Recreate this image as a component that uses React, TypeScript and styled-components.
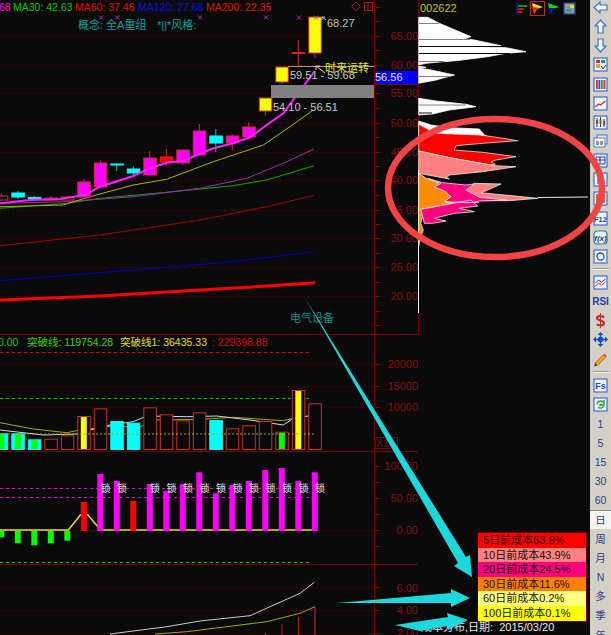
import styled, { createGlobalStyle } from 'styled-components';
import type { ReactNode } from 'react';

const GlobalStyle = createGlobalStyle`
  html, body { margin: 0; padding: 0; background: #0a0a0a; }
  body { width: 611px; height: 635px; overflow: hidden; font-family: "Liberation Sans", "Noto Sans CJK SC", sans-serif; }
`;

const AXIS_RED = '#960808';
const GRID_RED = '#7a0000';
const DOT_RED = '#6a0000';

// traced off the 3x crops, so everything is divided back down
type Pt = [number, number];
const crop = (pts: Pt[], dx = 0, dy = 0) =>
  pts.map(([x, y]) => `${(x / 3 + dx).toFixed(1)},${(y / 3 + dy).toFixed(1)}`).join(' ');

const slotX = (i: number) => 1.3 + 16.5 * i;

const Page = styled.div`
  position: relative;
  display: grid;
  grid-template-columns: 418px 172px 21px;
  width: 611px;
  height: 635px;
  overflow: hidden;
  background: #0a0a0a;
`;

const ChartColumn = styled.div`
  display: flex;
  flex-direction: column;
  height: 635px;
`;

const Pane = styled.section<{ $h: number; $line?: boolean }>`
  position: relative;
  display: flex;
  height: ${(p) => p.$h}px;
  flex: none;
  box-sizing: border-box;
  border-bottom: ${(p) => (p.$line ? `1px solid ${GRID_RED}` : 'none')};
`;

const Plot = styled.svg`
  display: block;
  width: 374px;
  height: 100%;
  flex: none;
`;

const AxisBox = styled.svg`
  display: block;
  width: 44px;
  height: 100%;
  flex: none;
  border-left: 1px solid ${GRID_RED};
  box-sizing: border-box;
`;

const AxisLabel = styled.text`
  font-size: 11px;
  fill: ${AXIS_RED};
  text-anchor: end;
`;

const Legend = styled.div<{ $top: number; $left: number; $size?: number }>`
  position: absolute;
  top: ${(p) => p.$top}px;
  left: ${(p) => p.$left}px;
  display: flex;
  white-space: nowrap;
  font-size: ${(p) => p.$size ?? 10.5}px;
  line-height: 14px;
`;

const LegendItem = styled.span<{ $color: string; $w?: number }>`
  color: ${(p) => p.$color};
  width: ${(p) => (p.$w ? `${p.$w}px` : 'auto')};
  flex: none;
`;

const ChartNote = styled.span<{ $x: number; $y: number; $color: string; $size?: number }>`
  position: absolute;
  left: ${(p) => p.$x}px;
  top: ${(p) => p.$y}px;
  color: ${(p) => p.$color};
  font-size: ${(p) => p.$size ?? 11}px;
  line-height: 14px;
  white-space: nowrap;
`;

const ScaleBadge = styled.span`
  position: absolute;
  left: 375px;
  top: 102px;
  width: 21px;
  height: 10px;
  border: 1px solid ${GRID_RED};
  color: #7a1010;
  font-size: 10.5px;
  line-height: 10px;
`;

const PriceTag = styled.div`
  position: absolute;
  left: 375px;
  top: 71px;
  width: 43px;
  height: 13px;
  background: #0000ff;
  color: #e8e8ff;
  font-size: 11px;
  line-height: 13px;
  border-bottom: 1px solid ${GRID_RED};
`;

const ChipColumn = styled.div`
  position: relative;
  height: 635px;
`;

const ChipHeader = styled.div`
  position: absolute;
  top: 1px;
  left: 2px;
  right: 0;
  display: flex;
  align-items: center;
  height: 14px;
  color: #c4c400;
  font-size: 11px;
`;

const ChipIcons = styled.div`
  display: flex;
  align-items: center;
  gap: 3px;
  margin-left: 58px;
`;

const ChipIcon = styled.svg<{ $active?: boolean }>`
  width: 13px;
  height: 13px;
  display: block;
  outline: ${(p) => (p.$active ? '1px solid #b03030' : 'none')};
`;

const ChipSvg = styled.svg`
  display: block;
  width: 172px;
  height: 635px;
`;

const CostTable = styled.div`
  position: absolute;
  left: 59px;
  top: 532px;
  width: 110px;
  border: 1px solid #600;
  border-left-color: #300;
  box-sizing: border-box;
`;

const CostRow = styled.div<{ $bg: string }>`
  height: 14.6px;
  background: ${(p) => p.$bg};
  padding-left: 5px;
  color: #201000;
  font-size: 11px;
  line-height: 14.6px;
  white-space: nowrap;
`;

const StatusLine = styled.div`
  position: absolute;
  left: 3px;
  top: 620px;
  color: #e6e6e6;
  font-size: 11px;
  line-height: 14px;
  white-space: pre;
`;

const SideBar = styled.nav`
  display: flex;
  flex-direction: column;
  align-items: center;
  height: 635px;
  overflow: hidden;
  background: #d4d0c8;
`;

const SideInner = styled.div`
  display: flex;
  flex-direction: column;
  align-items: center;
  width: 100%;
  margin-top: -2px;
`;

const SideItem = styled.div<{ $active?: boolean }>`
  display: flex;
  align-items: center;
  justify-content: center;
  flex: none;
  width: 100%;
  height: 19.15px;
  color: #2c4088;
  font-size: 10.5px;
  background: ${(p) => (p.$active ? '#f4f4f0' : 'transparent')};
  box-sizing: border-box;
  border-top: ${(p) => (p.$active ? '1px solid #8a8a8a' : 'none')};
`;

const SideDivider = styled.div`
  flex: none;
  width: 16px;
  height: 1px;
  margin: 2.5px 0;
  background: #9a9a94;
  border-bottom: 1px solid #f4f4f0;
`;

const IconSvg = styled.svg`
  display: block;
  width: 15px;
  height: 15px;
`;

const GlyphBold = styled.span`
  font-weight: 700;
  font-size: 10px;
  color: #2040c0;
`;

function Axis({ top, height, labels, ticks }: { top: number; height: number; labels: [string, number][]; ticks: number[] }) {
  return (
    <AxisBox viewBox={`374 ${top} 44 ${height}`} preserveAspectRatio="xMinYMin slice">
      {ticks.map((y) => (
        <line key={y} x1={375} x2={380} y1={y + 0.5} y2={y + 0.5} stroke={GRID_RED} />
      ))}
      {labels.map(([t, y]) => (
        <AxisLabel key={t} x={417} y={y + 4}>
          {t}
        </AxisLabel>
      ))}
    </AxisBox>
  );
}

function GridDots({ rows }: { rows: number[] }) {
  return (
    <>
      {rows.map((y) => (
        <line key={y} x1={0} x2={374} y1={y + 0.5} y2={y + 0.5} stroke={DOT_RED} strokeDasharray="1 3" />
      ))}
    </>
  );
}

type Candle = { i: number; top: number; bottom: number; hi: number; lo: number; kind: 'up' | 'yellow' | 'cyan' | 'red' | 'hollow' };

const candles: Candle[] = [
  { i: 0, top: 196, bottom: 200, hi: 193, lo: 201, kind: 'hollow' },
  { i: 1, top: 193, bottom: 197, hi: 191, lo: 199, kind: 'cyan' },
  { i: 2, top: 197.5, bottom: 198.5, hi: 196, lo: 201, kind: 'cyan' },
  { i: 3, top: 198, bottom: 200, hi: 196, lo: 201, kind: 'hollow' },
  { i: 4, top: 197, bottom: 200, hi: 196, lo: 202, kind: 'hollow' },
  { i: 5, top: 182, bottom: 197, hi: 179, lo: 197, kind: 'up' },
  { i: 6, top: 163, bottom: 187, hi: 160, lo: 187, kind: 'up' },
  { i: 7, top: 164, bottom: 165, hi: 163, lo: 171, kind: 'cyan' },
  { i: 8, top: 169, bottom: 173, hi: 166, lo: 176, kind: 'cyan' },
  { i: 9, top: 158, bottom: 175, hi: 151, lo: 175, kind: 'up' },
  { i: 10, top: 157, bottom: 162, hi: 149, lo: 166, kind: 'red' },
  { i: 11, top: 150, bottom: 163, hi: 150, lo: 165, kind: 'up' },
  { i: 12, top: 131, bottom: 155, hi: 124, lo: 155, kind: 'up' },
  { i: 13, top: 136, bottom: 143, hi: 129, lo: 152, kind: 'cyan' },
  { i: 14, top: 136, bottom: 143, hi: 134, lo: 150, kind: 'up' },
  { i: 15, top: 127, bottom: 137, hi: 122, lo: 137, kind: 'up' },
  { i: 16, top: 98, bottom: 111, hi: 98, lo: 116, kind: 'yellow' },
  { i: 17, top: 67, bottom: 82, hi: 67, lo: 84, kind: 'yellow' },
  { i: 18, top: 52.5, bottom: 53.5, hi: 40, lo: 66, kind: 'red' },
  { i: 19, top: 17, bottom: 53, hi: 17, lo: 58, kind: 'yellow' },
];

const candleColors = {
  up: { fill: '#ff00ff', edge: '#c83030', wick: '#c83030' },
  yellow: { fill: '#ffff00', edge: '#c83030', wick: '#c83030' },
  cyan: { fill: '#00ffff', edge: '#00ffff', wick: '#00c8c8' },
  red: { fill: '#ff0000', edge: '#e02020', wick: '#c83030' },
  hollow: { fill: '#0a0a0a', edge: '#c83030', wick: '#c83030' },
};

const priceRows = [36, 65, 93, 123, 152, 180, 210, 238, 267, 296];

const maLines: { pts: Pt[]; color: string; w: number }[] = [
  { pts: [[0, 737], [300, 705], [600, 660], [800, 620], [942, 586]], color: '#a80000', w: 1 },
  { pts: [[0, 842], [400, 810], [700, 785], [942, 755]], color: '#0000c8', w: 1 },
  { pts: [[0, 900], [300, 888], [600, 870], [800, 858], [945, 848]], color: '#ff0000', w: 3 },
  { pts: [[0, 625], [200, 610], [300, 595], [500, 577], [700, 557], [800, 540], [942, 497]], color: '#00b000', w: 1 },
  { pts: [[0, 610], [200, 605], [400, 590], [600, 565], [740, 535], [850, 490], [942, 447]], color: '#b020b0', w: 1 },
  { pts: [[0, 620], [190, 615], [270, 590], [400, 555], [500, 538], [640, 485], [790, 435], [870, 380], [940, 330]], color: '#b0b000', w: 1 },
  { pts: [[0, 610], [90, 600], [180, 597], [255, 585], [300, 560], [400, 528], [450, 505], [500, 488], [550, 482], [640, 445], [700, 430], [750, 412], [800, 375], [850, 340], [890, 285], [940, 220]], color: '#ff20ff', w: 2 },
];

function MainPane() {
  return (
    <Pane $h={335} $line>
      <Plot viewBox="0 0 374 334" preserveAspectRatio="xMinYMin slice">
        <GridDots rows={priceRows} />
        {maLines.slice(0, 6).map((l) => (
          <polyline key={l.color} points={crop(l.pts)} fill="none" stroke={l.color} strokeWidth={l.w} />
        ))}
        {candles.map((c) => {
          const col = candleColors[c.kind];
          const x = slotX(c.i);
          return (
            <g key={c.i}>
              <line x1={x} x2={x} y1={c.hi} y2={c.lo} stroke={col.wick} />
              <rect x={x - 6} y={c.top} width={12.5} height={c.bottom - c.top} fill={col.fill} stroke={col.edge} />
            </g>
          );
        })}
        <polyline points={crop(maLines[6].pts)} fill="none" stroke={maLines[6].color} strokeWidth={maLines[6].w} />
        {[101, 117, 200, 266, 299, 316].map((x) => (
          <path key={x} d={`M${x - 2} 15.5l4 4m0-4l-4 4`} stroke="#d020d0" fill="none" />
        ))}
        <line x1={288} x2={374} y1={66.5} y2={66.5} stroke="#9a9a9a" />
        <rect x={271} y={85} width={103} height={13} fill="#808080" />
        <path d="M322 17l4 3m-4-3l3 0m-3 0l0 3" stroke="#c8c8c8" fill="none" />
        <path d="M316 66l9 7m-9-7l4 0m-4 0l0 4" stroke="#d8d890" fill="none" />
        <path d="M356 2l4.500 4.500L356 11l-4.500-4.500z" stroke="#a01818" fill="none" />
        <rect x={364.500} y={2.500} width={8} height={8} stroke="#a01818" fill="none" />
        <line x1={368} x2={368} y1={2} y2={11} stroke="#a01818" />
      </Plot>
      <Axis
        top={0}
        height={334}
        ticks={[7, 21, 36, 50, 65, 79, 93, 108, 123, 137, 152, 166, 180, 195, 210, 224, 238, 253, 267, 282, 296, 311, 325]}
        labels={[['65.00', 36], ['60.00', 65], ['55.00', 93], ['50.00', 123], ['45.00', 152], ['40.00', 180], ['35.00', 210], ['30.00', 238], ['25.00', 267], ['20.00', 296]]}
      />
      <Legend $top={0} $left={-1}>
        <LegendItem $color="#ff00ff" $w={14}>68</LegendItem>
        <LegendItem $color="#00c800" $w={62}>MA30: 42.63</LegendItem>
        <LegendItem $color="#e01010" $w={63}>MA60: 37.46</LegendItem>
        <LegendItem $color="#1010e0" $w={68}>MA120: 27.68</LegendItem>
        <LegendItem $color="#e01010">MA200: 22.35</LegendItem>
      </Legend>
      <Legend $top={18} $left={78} $size={11}>
        <LegendItem $color="#10a0a0" $w={79}>概念: 全A重组</LegendItem>
        <LegendItem $color="#10a0a0">*||*风格:</LegendItem>
      </Legend>
      <ChartNote $x={327} $y={16} $color="#c0c0c0">68.27</ChartNote>
      <ChartNote $x={325} $y={61} $color="#e8e800">时来运转</ChartNote>
      <ChartNote $x={290} $y={68} $color="#c8c8c8">59.51 - 59.68</ChartNote>
      <ChartNote $x={273} $y={100} $color="#c8c8c8">54.10 - 56.51</ChartNote>
      <ChartNote $x={290} $y={311} $color="#0a9090">电气设备</ChartNote>
      <PriceTag>56.56</PriceTag>
    </Pane>
  );
}

type VolBar = { i: number; top: number; body: 'hollow' | 'cyan'; core?: string };

const volBars: VolBar[] = [
  { i: 0, top: 310, body: 'cyan', core: '#00ff00' },
  { i: 1, top: 310, body: 'cyan', core: '#00ff00' },
  { i: 2, top: 328, body: 'cyan', core: '#00ff00' },
  { i: 3, top: 326, body: 'hollow' },
  { i: 4, top: 316, body: 'hollow' },
  { i: 5, top: 258, body: 'hollow', core: '#ffff00' },
  { i: 6, top: 235, body: 'hollow' },
  { i: 7, top: 273, body: 'cyan' },
  { i: 8, top: 278, body: 'cyan' },
  { i: 9, top: 232, body: 'hollow' },
  { i: 10, top: 253, body: 'hollow' },
  { i: 11, top: 271, body: 'hollow' },
  { i: 12, top: 247, body: 'hollow' },
  { i: 13, top: 270, body: 'cyan' },
  { i: 14, top: 295, body: 'hollow' },
  { i: 15, top: 286, body: 'hollow' },
  { i: 16, top: 273, body: 'hollow' },
  { i: 17, top: 305, body: 'hollow', core: '#00ff00' },
  { i: 18, top: 180, body: 'hollow', core: '#ffff00' },
  { i: 19, top: 220, body: 'hollow' },
];

function VolumePane() {
  return (
    <Pane $h={117} $line>
      <Plot viewBox="0 335 374 116" preserveAspectRatio="xMinYMin slice">
        <GridDots rows={[364, 386, 407]} />
        <line x1={0} x2={312} y1={352.500} y2={352.500} stroke="#d01010" strokeDasharray="3 3" />
        <line x1={0} x2={312} y1={398.500} y2={398.500} stroke="#00c000" strokeDasharray="3 3" />
        <polyline points={crop([[0, 278], [100, 297], [200, 308], [240, 300], [320, 290], [420, 290], [470, 270], [600, 268], [700, 262], [850, 272], [880, 265]], 0, 330)} fill="none" stroke="#a8a800" />
        <polyline points={crop([[0, 300], [130, 315], [230, 312], [270, 300], [330, 285], [400, 275], [440, 258], [560, 260], [650, 258], [750, 270], [850, 285], [880, 265], [945, 255]], 0, 330)} fill="none" stroke="#d8d8d8" />
        {volBars.map((b) => {
          const x = slotX(b.i);
          const y = 330 + b.top / 3;
          const cyan = b.body === 'cyan';
          return (
            <g key={b.i}>
              <rect x={x - 6} y={y + 0.5} width={12.5} height={449 - y} fill={cyan ? '#00ffff' : '#0a0a0a'} stroke={cyan ? '#00ffff' : '#c83030'} />
              {b.core && <rect x={x - 3} y={y + 1} width={6} height={448 - y} fill={b.core} />}
            </g>
          );
        })}
        <line x1={0} x2={315} y1={434} y2={434} stroke="#a8a800" strokeDasharray="2 2" />
      </Plot>
      <Axis
        top={335}
        height={116}
        ticks={[364, 386, 407, 428]}
        labels={[['20000', 364], ['15000', 386], ['10000', 407]]}
      />
      <Legend $top={0} $left={-2}>
        <LegendItem $color="#00d000" $w={29}>0.00</LegendItem>
        <LegendItem $color="#40d000" $w={93}>突破线: 119754.28</LegendItem>
        <LegendItem $color="#e0e000" $w={92}>突破线1: 36435.33</LegendItem>
        <LegendItem $color="#d01010">: 229398.88</LegendItem>
      </Legend>
      <ScaleBadge>X1</ScaleBadge>
    </Pane>
  );
}

const lockBars: { i: number; top: number; color: string; lock?: boolean }[] = [
  { i: 0, top: 622, color: '#00ff00' },
  { i: 1, top: 640, color: '#00ff00' },
  { i: 2, top: 646, color: '#00ff00' },
  { i: 3, top: 640, color: '#00ff00' },
  { i: 4, top: 632, color: '#00ff00' },
  { i: 5, top: 516, color: '#ff0000' },
  { i: 6, top: 432, color: '#ff00ff', lock: true },
  { i: 7, top: 453, color: '#ff00ff', lock: true },
  { i: 8, top: 513, color: '#ff0000' },
  { i: 9, top: 462, color: '#ff00ff', lock: true },
  { i: 10, top: 483, color: '#ff00ff', lock: true },
  { i: 11, top: 462, color: '#ff00ff', lock: true },
  { i: 12, top: 427, color: '#ff00ff', lock: true },
  { i: 13, top: 490, color: '#ff00ff', lock: true },
  { i: 14, top: 465, color: '#ff00ff', lock: true },
  { i: 15, top: 453, color: '#ff00ff', lock: true },
  { i: 16, top: 420, color: '#ff00ff', lock: true },
  { i: 17, top: 414, color: '#ff00ff', lock: true },
  { i: 18, top: 453, color: '#ff00ff', lock: true },
  { i: 19, top: 427, color: '#ff00ff', lock: true },
];

const LockMark = styled.text`
  font-size: 10px;
  fill: #e4e4e4;
`;

function SignalPane() {
  return (
    <Pane $h={113} $line>
      <Plot viewBox="0 452 374 112" preserveAspectRatio="xMinYMin slice">
        <line x1={0} x2={312} y1={488.500} y2={488.500} stroke="#d010d0" strokeDasharray="3 3" />
        <line x1={0} x2={312} y1={497.500} y2={497.500} stroke="#d010d0" strokeDasharray="3 3" />
        <line x1={0} x2={70} y1={530.500} y2={530.500} stroke="#00c000" strokeDasharray="2 3" />
        <line x1={0} x2={312} y1={562.500} y2={562.500} stroke="#00c000" strokeDasharray="3 3" />
        <GridDots rows={[530]} />
        <polyline points={crop([[0, 600], [205, 600], [243, 553]], 0, 330)} fill="none" stroke="#f0e000" strokeWidth={1.5} />
        <polyline points={crop([[262, 553], [295, 592], [300, 600], [937, 600]], 0, 330)} fill="none" stroke="#f0e000" strokeWidth={1.5} />
        {lockBars.map((b) => {
          const y = 330 + b.top / 3;
          const base = 531;
          return (
            <rect
              key={b.i}
              x={slotX(b.i) - 3}
              y={Math.min(y, base)}
              width={6}
              height={Math.abs(base - y)}
              fill={b.color}
            />
          );
        })}
        {lockBars
          .filter((b) => b.lock)
          .map((b) => (
            <LockMark key={b.i} x={slotX(b.i) + 0.2} y={491.5}>
              锁
            </LockMark>
          ))}
      </Plot>
      <Axis
        top={452}
        height={112}
        ticks={[466, 482, 498, 514, 530, 546]}
        labels={[['100.00', 466], ['50.00', 498], ['0.00', 530]]}
      />
    </Pane>
  );
}

function CostPane() {
  return (
    <Pane $h={70}>
      <Plot viewBox="0 565 374 70" preserveAspectRatio="xMinYMin slice">
        <GridDots rows={[587, 610, 633]} />
        <polyline points={crop([[330, 912], [500, 890], [600, 873], [750, 857], [900, 790], [943, 757]], 0, 330)} fill="none" stroke="#c8c8c8" />
        <polyline points={crop([[465, 912], [560, 905], [800, 875], [900, 850], [945, 830]], 0, 330)} fill="none" stroke="#a8a800" />
        <line x1={315} x2={315} y1={607} y2={635} stroke="#c83030" />
        <line x1={298.500} x2={298.500} y1={617} y2={635} stroke="#a82020" />
        <line x1={282} x2={282} y1={624} y2={635} stroke="#a82020" />
        <line x1={265.500} x2={265.500} y1={633} y2={635} stroke="#a82020" />
      </Plot>
      <Axis
        top={565}
        height={70}
        ticks={[587, 610, 633]}
        labels={[['6.00', 588], ['4.00', 610], ['2.00', 633]]}
      />
    </Pane>
  );
}

// crop origin x 416 against column origin x 418
const CHIP_DX = -2;

function Hump({ pts, dy, fill, edge = '#e8e8e8' }: { pts: Pt[]; dy: number; fill: string; edge?: string }) {
  return <polygon points={crop(pts, CHIP_DX, dy)} fill={fill} stroke={edge} strokeWidth={0.8} />;
}

function Gap({ y, to, color = '#808080' }: { y: number; to: number; color?: string }) {
  return <line x1={1} x2={to} y1={y} y2={y} stroke={color} />;
}

function ChipPanel() {
  return (
    <ChipColumn>
      <ChipSvg viewBox="0 0 172 635">
        <line x1={0.5} x2={0.5} y1={0} y2={335} stroke={GRID_RED} />
        <line x1={0.5} x2={0.5} y1={170} y2={313} stroke="#f0f0f0" />
        <Hump dy={10} fill="#fff" edge="#fff" pts={[[8, 22], [35, 22], [70, 40], [165, 80], [145, 86], [175, 90], [255, 107], [180, 110], [270, 113], [330, 125], [270, 130], [215, 140], [120, 152], [80, 155], [30, 160], [8, 165]]} />
        <Hump dy={10} fill="#fff" edge="#fff" pts={[[8, 168], [30, 172], [8, 174]]} />
        <Gap y={23.5} to={21} />
        <Gap y={39.5} to={52} />
        <Gap y={46.5} to={84} color="#0a0a0a" />
        <Gap y={53.5} to={92} color="#0a0a0a" />
        <Gap y={61.5} to={26} />
        <Hump dy={10} fill="#fff" edge="#fff" pts={[[8, 175], [35, 178], [115, 195], [60, 210], [8, 220]]} />
        <Gap y={76.5} to={32} />
        <Hump dy={10} fill="#fff" edge="#fff" pts={[[8, 265], [60, 273], [150, 283], [180, 290], [100, 300], [50, 312], [8, 315]]} />
        <Gap y={105} to={48} />
        <Gap y={113} to={14} color="#0a0a0a" />
        <Hump dy={115} fill="#fff" edge="#fff" pts={[[8, 18], [45, 30], [100, 38], [190, 42], [205, 60], [230, 70], [8, 70]]} />
        <Hump dy={170} fill="#ff8c00" pts={[[8, 10], [35, 28], [70, 40], [55, 52], [85, 62], [105, 80], [85, 95], [135, 95], [80, 105], [15, 118], [20, 140], [14, 160], [22, 180], [12, 205], [8, 230]]} />
        <Hump dy={170} fill="#ff8080" pts={[[175, 40], [255, 42], [215, 60], [195, 68], [366, 85], [280, 92], [190, 92], [150, 60]]} />
        <Hump dy={170} fill="#ff0080" pts={[[35, 25], [80, 38], [150, 45], [175, 42], [150, 60], [190, 82], [272, 90], [190, 93], [160, 100], [85, 95], [105, 80], [85, 62], [55, 52], [75, 40]]} />
        <Hump dy={170} fill="#ff0080" pts={[[15, 118], [85, 105], [135, 95], [165, 90], [185, 108], [130, 115], [175, 125], [115, 130], [55, 145], [90, 153], [50, 160], [25, 160]]} />
        <polyline points={crop([[85, 96], [190, 98]], CHIP_DX, 170)} stroke="#d0d0d0" fill="none" />
        <Hump dy={115} fill="#ff0000" edge="#e0e0e0" pts={[[8, 28], [40, 45], [60, 55], [190, 60], [230, 65], [305, 77], [200, 85], [120, 92], [115, 105], [200, 112], [300, 125], [240, 135], [225, 140], [238, 148], [225, 150], [110, 130], [8, 108]]} />
        <Hump dy={115} fill="#ff8080" pts={[[8, 108], [110, 130], [225, 150], [238, 152], [300, 155], [200, 170], [100, 180], [92, 188], [100, 192], [8, 175]]} />
        <line x1={120} x2={170} y1={197.5} y2={197} stroke="#e8e8e8" />
      </ChipSvg>
      <ChipHeader>
        002622
        <ChipIcons>
          <ChipIcon viewBox="0 0 13 13">
            <path d="M1 1h2v11H1z" fill="#1010a0" />
            <path d="M3 3h9v2H3z" fill="#00a000" />
            <path d="M3 6h6v2H3z" fill="#c01010" />
            <path d="M3 9h4v2H3z" fill="#c01010" />
          </ChipIcon>
          <ChipIcon viewBox="0 0 13 13" $active>
            <path d="M1 1l11 4-6 2-3 5z" fill="#ffe000" />
            <path d="M1 5l8 1-4 2-2 4z" fill="#ff2000" />
          </ChipIcon>
          <ChipIcon viewBox="0 0 13 13">
            <path d="M1 1l11 4-6 2-3 5z" fill="#00e000" />
            <path d="M1 6l7 0-3 2-2 4z" fill="#0000d0" />
          </ChipIcon>
          <ChipIcon viewBox="0 0 13 13">
            <rect width="13" height="13" fill="#202860" />
            <rect x="1.500" y="1.500" width="10" height="10" fill="#9098b0" />
            <path d="M3 7h5v3H3z" fill="#20a0c0" />
            <path d="M7 3h4v3H7z" fill="#e0e000" />
          </ChipIcon>
        </ChipIcons>
      </ChipHeader>
      <CostTable>
        <CostRow $bg="#ff0000">5日前成本63.9%</CostRow>
        <CostRow $bg="#ff8080">10日前成本43.9%</CostRow>
        <CostRow $bg="#ff0080">20日前成本24.5%</CostRow>
        <CostRow $bg="#ff8000">30日前成本11.6%</CostRow>
        <CostRow $bg="#ffff80">60日前成本0.2%</CostRow>
        <CostRow $bg="#ffff00">100日前成本0.1%</CostRow>
      </CostTable>
      <StatusLine>成本分布,日期:  2015/03/20</StatusLine>
    </ChipColumn>
  );
}

const BLUE = '#3d6fd8';

function Framed({ children }: { children: ReactNode }) {
  return (
    <IconSvg viewBox="0 0 15 15">
      <rect x="1" y="1" width="13" height="13" fill="#f0f4ff" stroke={BLUE} strokeWidth="1.200" />
      {children}
    </IconSvg>
  );
}

const arrowPath = { left: 'M1 7.500L7 2v3h7v5H7v3z', up: 'M7.500 1L13 7h-3v7H5V7H2z', down: 'M7.500 14L13 8h-3V1H5v7H2z' };

function BlockArrow({ dir }: { dir: keyof typeof arrowPath }) {
  return (
    <IconSvg viewBox="0 0 15 15">
      <path d={arrowPath[dir]} fill="#f4f8ff" stroke={BLUE} strokeWidth="1.200" />
    </IconSvg>
  );
}

function SideTools() {
  return (
    <SideBar>
      <SideInner>
        <SideItem><BlockArrow dir="left" /></SideItem>
        <SideItem><BlockArrow dir="up" /></SideItem>
        <SideItem><BlockArrow dir="down" /></SideItem>
        <SideItem>
          <Framed>
            <path d="M3 3h4v3H3z" fill="#d03030" /><path d="M8 3h4v3H8z" fill="#30a030" />
            <path d="M3 7h4v4H3z" fill="#e0a030" /><path d="M8 9l2 3 3-4" stroke="#404040" fill="none" />
          </Framed>
        </SideItem>
        <SideItem>
          <Framed>
            {[3, 5.500, 8, 10.500].map((x, i) => (
              <g key={x}>
                <rect x={x} y="3" width="1.800" height="9" fill={['#d03030', '#3050c0', '#30a030', '#d03030'][i]} />
              </g>
            ))}
          </Framed>
        </SideItem>
        <SideItem>
          <Framed><path d="M2.500 11l3-3 2 1 5-4" stroke="#e02020" fill="none" strokeWidth="1.300" /></Framed>
        </SideItem>
        <SideItem>
          <Framed>
            <path d="M4 3v9M7.500 2v10M11 4v8" stroke="#404040" />
            <rect x="3" y="5" width="2" height="4" fill="#d02020" /><rect x="6.500" y="4" width="2" height="5" fill="#109010" /><rect x="10" y="6" width="2" height="4" fill="#d02020" />
          </Framed>
        </SideItem>
        <SideItem>
          <IconSvg viewBox="0 0 15 15">
            <rect x="4" y="1" width="10" height="9" fill="#e8ecf4" stroke={BLUE} />
            <rect x="1" y="4" width="11" height="9" fill="#f0f0f0" stroke="#6080b0" />
            <path d="M3 7h3v4H3zM7 7h3v4H7z" fill="#9098a0" />
          </IconSvg>
        </SideItem>
        <SideItem>
          <Framed><path d="M3 4h9v7H3z" fill="none" stroke="#2040a0" /><path d="M3 7h9M7 4v7" stroke="#2040a0" /></Framed>
        </SideItem>
        <SideItem>
          <Framed><path d="M3 3h5v2H3z" fill="#f0c040" /><path d="M5 6v6M9 6v6M5 9h4" stroke="#2040a0" fill="none" /></Framed>
        </SideItem>
        <SideItem>
          <Framed><rect x="3" y="3" width="9" height="9" fill="#e86040" /></Framed>
        </SideItem>
        <SideItem>
          <IconSvg viewBox="0 0 15 15">
            <rect x="1" y="1" width="13" height="13" fill="#f0f4ff" stroke={BLUE} strokeWidth="1.200" />
            <text x="7.500" y="11" fontSize="7.500" fontWeight="700" fill="#304890" textAnchor="middle">F12</text>
          </IconSvg>
        </SideItem>
        <SideItem>
          <IconSvg viewBox="0 0 15 15">
            <rect x="1" y="1" width="13" height="13" rx="3" fill="#e4f0f4" stroke="#3080a0" strokeWidth="1.200" />
            <text x="7.500" y="11" fontSize="8" fontStyle="italic" fontWeight="700" fill="#203880" textAnchor="middle">f(x)</text>
          </IconSvg>
        </SideItem>
        <SideItem>
          <Framed><circle cx="7.500" cy="7.500" r="3.500" fill="none" stroke="#2050b0" strokeWidth="1.300" /></Framed>
        </SideItem>
        <SideDivider />
        <SideItem>
          <Framed>
            <path d="M2.500 8l3-3 3 2 4-3" stroke="#2040c0" fill="none" />
            <path d="M2.500 11l3-3 3 2 4-3" stroke="#e02020" fill="none" />
          </Framed>
        </SideItem>
        <SideItem><GlyphBold>RSI</GlyphBold></SideItem>
        <SideItem>
          <IconSvg viewBox="0 0 15 15">
            <path d="M11 4.500C10 2.500 4 2.500 4 5c0 3 7 2 7 5.500 0 2.500-6 2.500-7 .5" fill="none" stroke="#b83030" strokeWidth="2.200" />
            <path d="M7.500 0v15" stroke="#b83030" />
          </IconSvg>
        </SideItem>
        <SideItem>
          <IconSvg viewBox="0 0 15 15">
            <path d="M7.500 0l3 3h-6zM7.500 15l3-3h-6zM0 7.500l3-3v6zM15 7.500l-3-3v6z" fill="#1050c0" />
            <circle cx="7.500" cy="7.500" r="2.800" fill="#1050c0" />
            <path d="M7.500 3v9M3 7.500h9" stroke="#1050c0" strokeWidth="1.500" />
          </IconSvg>
        </SideItem>
        <SideItem>
          <IconSvg viewBox="0 0 15 15">
            <path d="M2 11l8-8 2.500 2.500-8 8z" fill="#f0a020" stroke="#a05010" strokeWidth="0.600" />
            <path d="M10 3l1.500-1.500 2.500 2.500-1.500 1.500z" fill="#e05050" />
            <path d="M2 11l-1 3.500 3.500-1z" fill="#404040" />
          </IconSvg>
        </SideItem>
        <SideDivider />
        <SideItem>
          <IconSvg viewBox="0 0 15 15">
            <rect x="1" y="1" width="13" height="13" fill="#f0f4ff" stroke={BLUE} strokeWidth="1.200" />
            <text x="7.500" y="11" fontSize="9" fontWeight="700" fill="#2c4a96" textAnchor="middle">Fs</text>
          </IconSvg>
        </SideItem>
        <SideItem>
          <Framed><path d="M4 7.500a3.500 3.500 0 0 1 6-2.500l1-1v4H7l1.500-1.500M11 8a3.500 3.500 0 0 1-6 2" fill="none" stroke="#30a040" strokeWidth="1.500" /></Framed>
        </SideItem>
        {['1', '5', '15', '30', '60'].map((t) => (
          <SideItem key={t}>{t}</SideItem>
        ))}
        <SideItem $active>日</SideItem>
        {['周', '月', 'N', '多', '季', '年'].map((t) => (
          <SideItem key={t}>{t}</SideItem>
        ))}
      </SideInner>
    </SideBar>
  );
}

const Annotations = styled.svg`
  position: absolute;
  inset: 0;
  width: 611px;
  height: 635px;
  pointer-events: none;
`;

export default function App() {
  return (
    <>
      <GlobalStyle />
      <Page>
        <ChartColumn>
          <MainPane />
          <VolumePane />
          <SignalPane />
          <CostPane />
        </ChartColumn>
        <ChipPanel />
        <SideTools />
        <Annotations viewBox="0 0 611 635">
          <ellipse cx={495} cy={188} rx={107} ry={69} fill="none" stroke="#f24444" strokeWidth={6.500} />
          <polygon points="305,298 466,557 470,555 472,577 454,566 458,563" fill="#1cd8dc" />
          <polygon points="337,603 451,593 451,589 470,598 451,607 451,603" fill="#1cd8dc" />
          <polygon points="395,625 448,617 447,613 468,620 448,630 448,626 420,631" fill="#1cd8dc" />
        </Annotations>
      </Page>
    </>
  );
}
